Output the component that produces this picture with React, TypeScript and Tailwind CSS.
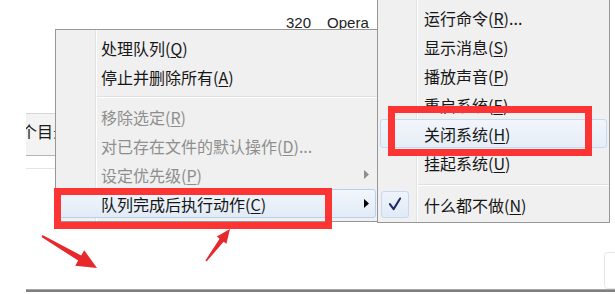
import React from "react";

type ItemProps = {
  label: string;
  accel: string;
  suffix?: string;
  disabled?: boolean;
  arrow?: boolean;
};

const Label = ({ label, accel, suffix, disabled }: ItemProps) => (
  <span
    className={`whitespace-nowrap text-[16px] leading-[20px] ${
      disabled ? "text-[#8e8e8e]" : "text-[#161616]"
    }`}
  >
    {label}(<span className="underline underline-offset-[2px] decoration-1">{accel}</span>){suffix}
  </span>
);

const Tri = ({ color }: { color: string }) => (
  <svg width="5" height="9" viewBox="0 0 5 9" className="shrink-0">
    <path d="M0 0 L5 4.5 L0 9 Z" fill={color} />
  </svg>
);

const MainItem = (p: ItemProps) => (
  <div className="flex h-[29px] items-center pl-[45px]">
    <Label {...p} />
    {p.arrow && (
      <span className="ml-auto mr-[11px] flex">
        <Tri color="#8e8e8e" />
      </span>
    )}
  </div>
);

const SubItem = (p: ItemProps) => (
  <div className="flex h-[29px] items-center pl-[46px]">
    <Label {...p} />
  </div>
);

const Sep = ({ left, h, top }: { left: string; h: string; top: string }) => (
  <div className={`${h} ${top} flex flex-col`}>
    <div className={`${left} h-px bg-[#e0e0e0]`} />
    <div className={`${left} h-px bg-white`} />
  </div>
);

export default function App() {
  return (
    <div className="relative h-[294px] w-[615px] overflow-hidden bg-white font-['Noto_Sans_CJK_SC','Noto_Sans',sans-serif]">
      {/* background window content */}
      <div className="flex flex-col">
        <div className="flex h-[30px] gap-[16px] pl-[286px] pt-[15px] font-['Liberation_Sans',Arial,sans-serif] text-[15px] leading-[15px] text-[#222]">
          <span>320</span>
          <span>Opera</span>
        </div>
        <div className="ml-[26px] mt-[83px] flex h-[43px] w-[60px] items-start overflow-hidden border-b border-t border-b-[#b4b4b4] border-t-[#d6d6d6] bg-[#f3f3f3] pt-[9px]">
          <span className="-ml-[5px] whitespace-nowrap text-[16px] leading-[16px] text-[#1a1a1a]">个目录</span>
        </div>
        <div className="ml-[26px] mt-[12px] h-px w-[40px] bg-[#e4e4e4]" />
        <div className="ml-[26px] mt-[120px] h-[3px] border-t border-[#a5a5a5] bg-[#7f7f7f]" />
      </div>

      {/* main context menu */}
      <div className="absolute left-[55px] top-[29px] w-[326px] border border-[#979797] bg-[#f0f0f0] py-[3px]">
        <div className="absolute bottom-0 left-[39px] top-0 w-[2px] border-l border-r border-l-[#e2e3e3] border-r-white" />
        <div className="relative flex flex-col">
          <MainItem label="处理队列" accel="Q" />
          <MainItem label="停止并删除所有" accel="A" />
          <Sep left="ml-[41px]" h="h-[11px]" top="pt-[5px]" />
          <MainItem label="移除选定" accel="R" disabled />
          <MainItem label="对已存在文件的默认操作" accel="D" suffix="..." disabled />
          <MainItem label="设定优先级" accel="P" disabled arrow />
          <div className="ml-[2px] mr-[4px] flex h-[29px] items-center rounded-[3px] border border-[#b7d0ee] bg-gradient-to-b from-[#f1f6fc] to-[#e2ebf6] pl-[42px]">
            <Label label="队列完成后执行动作" accel="C" />
            <span className="ml-auto mr-[6px] flex">
              <Tri color="#000" />
            </span>
          </div>
        </div>
      </div>

      {/* submenu */}
      <div className="absolute left-[377px] top-[-1px] w-[233px] border border-[#979797] bg-[#f0f0f0] py-[3px]">
        <div className="absolute bottom-0 left-[38px] top-0 w-[2px] border-l border-r border-l-[#e2e3e3] border-r-white" />
        <div className="relative flex flex-col">
          <SubItem label="运行命令" accel="R" suffix="..." />
          <SubItem label="显示消息" accel="S" />
          <SubItem label="播放声音" accel="P" />
          <SubItem label="重启系统" accel="E" />
          <div className="mx-[2px] flex h-[29px] items-center rounded-[3px] border border-[#c6d9ef] bg-gradient-to-b from-[#f2f6fb] to-[#e5edf6] pl-[43px]">
            <Label label="关闭系统" accel="H" />
          </div>
          <SubItem label="挂起系统" accel="U" />
          <Sep left="ml-[40px]" h="h-[13px]" top="pt-[7px]" />
          <div className="flex h-[29px] items-center">
            <div className="ml-[3px] flex h-[27px] w-[28px] items-center justify-center rounded-[3px] border border-[#c6d9ef] bg-gradient-to-b from-[#eef4fb] to-[#e1eaf5]">
              <svg width="28" height="27" viewBox="0 0 28 27">
                <path d="M8.5 13 L12.5 18.5 L19.5 7" fill="none" stroke="#1d2a6e" strokeWidth="2.2" strokeLinejoin="round" strokeLinecap="round" />
              </svg>
            </div>
            <span className="ml-[15px]">
              <Label label="什么都不做" accel="N" />
            </span>
          </div>
        </div>
      </div>

      {/* annotations */}
      <div className="absolute left-[388px] top-[106px] h-[50px] w-[204px] border-[7px] border-[#fc3434]" />
      <div className="absolute left-[54px] top-[188px] h-[41px] w-[278px] border-[7px] border-[#fc3434]" />
      <svg className="pointer-events-none absolute left-0 top-0" width="615" height="294" viewBox="0 0 615 294">
        <polygon
          points="42.5,235.1 81.2,255.4 84.2,250.2 97,268 75.2,265.8 78.2,260.6 41.5,236.9"
          fill="#e8292c"
        />
        <polygon
          points="205.4,260.5 219.6,238.7 216.8,236.6 230,229 226.4,243.8 223.6,241.7 206.6,261.5"
          fill="#e8292c"
        />
        <rect x="604.5" y="252.5" width="14" height="36" rx="3" fill="none" stroke="#e6e6e6" />
      </svg>
    </div>
  );
}
